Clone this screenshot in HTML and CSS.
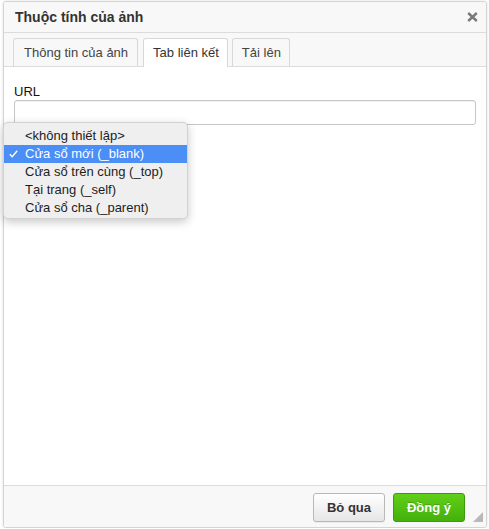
FILE: index.html
```html
<!DOCTYPE html>
<html lang="vi">
<head>
<meta charset="utf-8">
<title>Thuộc tính của ảnh</title>
<link rel="stylesheet" href="styles.css">
</head>
<body>
<div class="dialog">
  <div class="title">
    <span class="title-text">Thuộc tính của ảnh</span>
    <svg class="close" width="11" height="10" viewBox="0 0 11 10"><path d="M1.2 1 L9.8 9 M9.8 1 L1.2 9" stroke="#7a7a7a" stroke-width="2.4" stroke-linecap="butt"/></svg>
  </div>
  <div class="tabs">
    <span class="tab">Thông tin của ảnh</span>
    <span class="tab active">Tab liên kết</span>
    <span class="tab">Tải lên</span>
  </div>
  <div class="contents">
    <label class="label">URL</label>
    <div class="input"></div>
  </div>
  <div class="footer">
    <span class="btn cancel">Bỏ qua</span>
    <span class="btn ok">Đồng ý</span>
    <svg class="resize" width="10" height="10" viewBox="0 0 10 10"><polygon points="10,0 10,10 0,10" fill="#b8b8b8"/></svg>
  </div>
</div>
<div class="menu">
  <div class="item">&lt;không thiết lập&gt;</div>
  <div class="item selected"><svg class="check" width="9" height="8" viewBox="0 0 9 8"><path d="M0.8 4.3 L3.2 6.8 L8.2 0.8" fill="none" stroke="#fff" stroke-width="1.4"/></svg>Cửa sổ mới (_blank)</div>
  <div class="item">Cửa sổ trên cùng (_top)</div>
  <div class="item">Tại trang (_self)</div>
  <div class="item">Cửa sổ cha (_parent)</div>
</div>
</body>
</html>
```
FILE: styles.css
```css
html, body {
  margin: 0;
  padding: 0;
  background: #fff;
  font-family: "Liberation Sans", Arial, sans-serif;
  font-size: 13px;
  color: #222;
}

.dialog {
  box-sizing: border-box;
  margin: 1px 0 0 3px;
  width: 484px;
  height: 527px;
  border: 1px solid #d4d4d4;
  border-radius: 3px;
  box-shadow: 0 0 3px rgba(0,0,0,0.12);
  background: #fff;
  display: flex;
  flex-direction: column;
  overflow: hidden;
}

.title {
  height: 30px;
  flex: none;
  display: flex;
  align-items: center;
  justify-content: space-between;
  padding: 0 8px 0 11px;
  background: #f8f8f8;
  border-bottom: 1px solid #dcdcdc;
}

.title-text {
  font-size: 14px;
  font-weight: bold;
  color: #333;
  margin-top: -1px;
}

.close {
  display: block;
  margin-top: -1px;
}

.tabs {
  flex: none;
  display: flex;
  align-items: flex-end;
  gap: 5px;
  height: 33px;
  padding-left: 9px;
  background: #f8f8f8;
  border-bottom: 1px solid #dcdcdc;
}

.tab {
  box-sizing: border-box;
  height: 28px;
  line-height: 27px;
  padding: 0 9px 0 10px;
  border: 1px solid #d8d8d8;
  border-bottom: none;
  border-radius: 3px 3px 0 0;
  background: #f8f8f8;
  color: #444;
}

.tab.active {
  background: #fff;
  height: 29px;
  margin-bottom: -1px;
  padding: 0 8px 0 9px;
  color: #333;
}

.tab:last-child {
  padding: 0 8px 0 9px;
  margin-left: -1px;
}

.contents {
  flex: 1;
  padding: 17px 10px 0 10px;
  background: #fff;
  display: flex;
  flex-direction: column;
}

.label {
  line-height: 16px;
  color: #111;
}

.input {
  box-sizing: border-box;
  margin-top: 0;
  height: 25px;
  border: 1px solid #c6c6c6;
  border-radius: 3px;
  box-shadow: inset 0 1px 1px rgba(0,0,0,0.06);
  background: #fff;
}

.footer {
  flex: none;
  height: 41px;
  border-top: 1px solid #dcdcdc;
  background: #f8f8f8;
  display: flex;
  align-items: center;
  justify-content: flex-end;
  gap: 8px;
  padding-right: 21px;
  position: relative;
}

.btn {
  box-sizing: border-box;
  width: 72px;
  height: 29px;
  line-height: 27px;
  text-align: center;
  font-weight: bold;
  border-radius: 3px;
  margin-top: 1px;
}

.cancel {
  border: 1px solid #b8b8b8;
  background: linear-gradient(#ffffff, #e6e6e6);
  color: #333;
  box-shadow: 0 1px 0 rgba(0,0,0,0.05);
}

.ok {
  border: 1px solid #3b9a0d;
  background: linear-gradient(#62cf19, #43b00c);
  color: #fff;
  text-shadow: 0 -1px 0 rgba(0,0,0,0.2);
}

.resize {
  position: absolute;
  right: 3px;
  bottom: 5px;
  display: block;
}

.menu {
  position: absolute;
  left: 3px;
  top: 122px;
  box-sizing: border-box;
  width: 185px;
  height: 97px;
  padding-top: 4px;
  background: #efefef;
  border: 1px solid rgba(0,0,0,0.12);
  border-radius: 5px;
  box-shadow: 0 3px 10px rgba(0,0,0,0.22);
  font-family: "Liberation Sans", Arial, sans-serif;
  font-size: 13px;
}

.item {
  position: relative;
  height: 18px;
  line-height: 18px;
  padding-left: 21px;
  color: #1d1d1d;
}

.item.selected {
  background: #4a8ef6;
  color: #fff;
}

.check {
  position: absolute;
  left: 5px;
  top: 5px;
}
```
